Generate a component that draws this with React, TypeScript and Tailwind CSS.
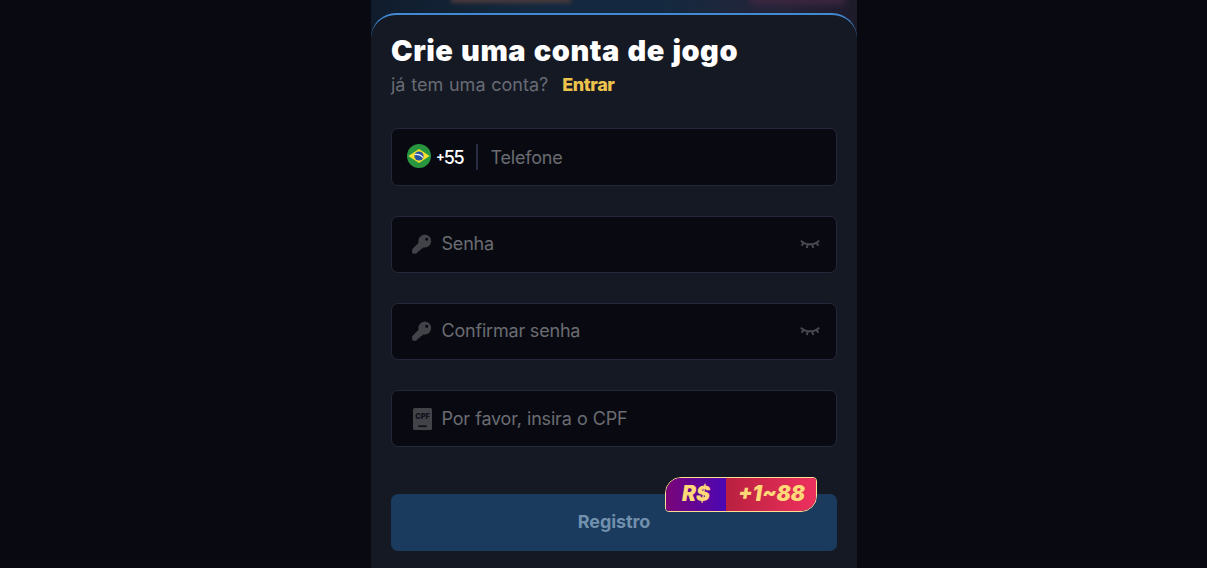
import { useState } from "react";

const FIELD = "flex w-full items-center rounded-[7px] border border-[#24283a] bg-[#090a11]";
const INPUT =
  "h-full min-w-0 flex-1 bg-transparent text-[18px] tracking-[-0.2px] text-[#d5d8e0] outline-none placeholder:text-[#6a6c72]";

function BrazilFlag() {
  return (
    <svg viewBox="0 0 24 24" className="relative -top-px size-6 shrink-0">
      <circle cx="12" cy="12" r="12" fill="#27963f" />
      <path d="M12 5 22.6 12 12 19 1.4 12Z" fill="#f4e02d" />
      <circle cx="12" cy="12" r="4.6" fill="#2552a2" />
      <path d="M7.8 10.6c3.2-.6 6.2.5 8.3 3" fill="none" stroke="#e6edf2" strokeWidth="1.1" />
    </svg>
  );
}

function KeyIcon() {
  return (
    <svg viewBox="0 0 20 20" className="relative -top-px size-5 shrink-0">
      <path
        fillRule="evenodd"
        fill="#414349"
        d="M13 .4a6.6 6.6 0 0 0-6.4 8.3L.8 14.5c-.5.5-.7 1.2-.7 2v1.6c0 1 .6 1.7 1.6 1.7h1.2c.9 0 1.6-.3 2.1-.9l1-1.3 1.6-.5.7-1.6 1.5-.5 1.2-1.6A6.6 6.6 0 1 0 13 .4Zm1.7 3.4a1.5 1.5 0 1 1 0 3 1.5 1.5 0 0 1 0-3Z"
      />
    </svg>
  );
}

function ClosedEyeIcon() {
  return (
    <svg viewBox="0 0 20 12" className="relative -top-px h-3 w-5" fill="none" stroke="#484a50" strokeWidth="2">
      <path d="M.9 2.6c4.3 5 13.9 5 18.2 0M4 4.6 1.5 7.6M8 5.8 6.8 10M12 5.8l1.2 4.2M16 4.6l2.5 3" />
    </svg>
  );
}

function CpfIcon() {
  return (
    <svg viewBox="0 0 19 22" className="h-[22px] w-[19px] shrink-0">
      <rect width="19" height="22" rx="1.5" fill="#414349" />
      <text x="9.5" y="11.3" textAnchor="middle" textLength="14.5" lengthAdjust="spacingAndGlyphs" fontFamily="Inter, sans-serif" fontSize="7.5" fontWeight="900" fill="#11121a">
        CPF
      </text>
      <rect x="5.3" y="17.3" width="8.4" height="1.8" fill="#11121a" />
    </svg>
  );
}

function PasswordField({ placeholder }: { placeholder: string }) {
  const [visible, setVisible] = useState(false);

  return (
    <div className={`${FIELD} h-[57px] pr-4 pl-5`}>
      <KeyIcon />
      <input type={visible ? "text" : "password"} placeholder={placeholder} className={`${INPUT} ml-[9.5px] pb-[2px]`} />
      <button type="button" aria-label="Mostrar senha" onClick={() => setVisible((v) => !v)}>
        <ClosedEyeIcon />
      </button>
    </div>
  );
}

export default function App() {
  return (
    <div className="h-[568px] overflow-hidden bg-[#080911] font-['Inter','Noto_Sans',sans-serif]">
      <main className="ml-[371px] h-[568px] w-[486px] bg-[linear-gradient(90deg,#101c2c_0%,#14293f_35%,#14293f_60%,#252338_85%,#1d1a2a_100%)]">
        <div className="flex h-[13px] justify-between overflow-hidden pr-3 pl-20">
          <div className="-mt-3 h-[15px] w-[120px] bg-[#493a3b] blur-[2px]" />
          <div className="-mt-3 h-[17px] w-[95px] bg-[#3a263f] blur-[3px]" />
        </div>
        <section className="h-[555px] rounded-t-[25px] border-t-2 border-[#4389d2] bg-[#151923] px-5 pt-[21px]">
          <h1 className="text-[29px] leading-[30px] font-black tracking-[0.5px] text-white [word-spacing:1.4px]">Crie uma conta de jogo</h1>
          <p className="mt-[6px] flex text-[18px] leading-[26px] text-[#686b75]">
            <span className="[word-spacing:0.7px]">já tem uma conta?</span>
            <a href="#" className="ml-[14px] font-extrabold tracking-[-0.4px] text-[#edc34d]">Entrar</a>
          </p>

          <form className="mt-[30px] flex flex-col">
            <div className={`${FIELD} h-[58px] pr-4 pl-[15px]`}>
              <BrazilFlag />
              <span className="ml-[5px] flex w-[28px] items-center text-[18px] font-medium tracking-[-1.2px] text-white">
                <span className="text-[13px] font-bold">+</span>55
              </span>
              <span className="ml-3 h-[26px] w-[2px] bg-[#292c43]" />
              <input type="tel" placeholder="Telefone" className={`${INPUT} ml-[12.5px]`} />
            </div>
            <div className="mt-[30px] flex flex-col gap-[30px]">
              <PasswordField placeholder="Senha" />
              <PasswordField placeholder="Confirmar senha" />
              <div className={`${FIELD} h-[57px] pr-4 pl-[21px]`}>
                <CpfIcon />
                <input type="text" placeholder="Por favor, insira o CPF" className={`${INPUT} ml-[9.5px] [word-spacing:0.5px]`} />
              </div>
            </div>

            <div className="relative mt-[47px]">
              <button type="button" className="h-[57px] w-full rounded-[7px] bg-[#1a3b5e] pb-[2px] text-[18px] font-bold tracking-[-0.1px] text-[#7190ad]">
                Registro
              </button>
              <div className="absolute -top-[17px] right-5 flex h-[35px] w-[152px] overflow-hidden rounded-tl-[16px] rounded-tr-[4px] rounded-br-[16px] rounded-bl-[4px] border border-[#ffdf92] text-[21px] leading-[32px] font-black text-[#ffd978] italic">
                <span className="w-[60px] bg-[linear-gradient(90deg,#7a0578,#4b07b4)] text-center">R$</span>
                <span className="flex-1 bg-[linear-gradient(90deg,#b9203f,#ee315f)] pl-px text-center">+1~88</span>
              </div>
            </div>
          </form>
        </section>
      </main>
    </div>
  );
}
